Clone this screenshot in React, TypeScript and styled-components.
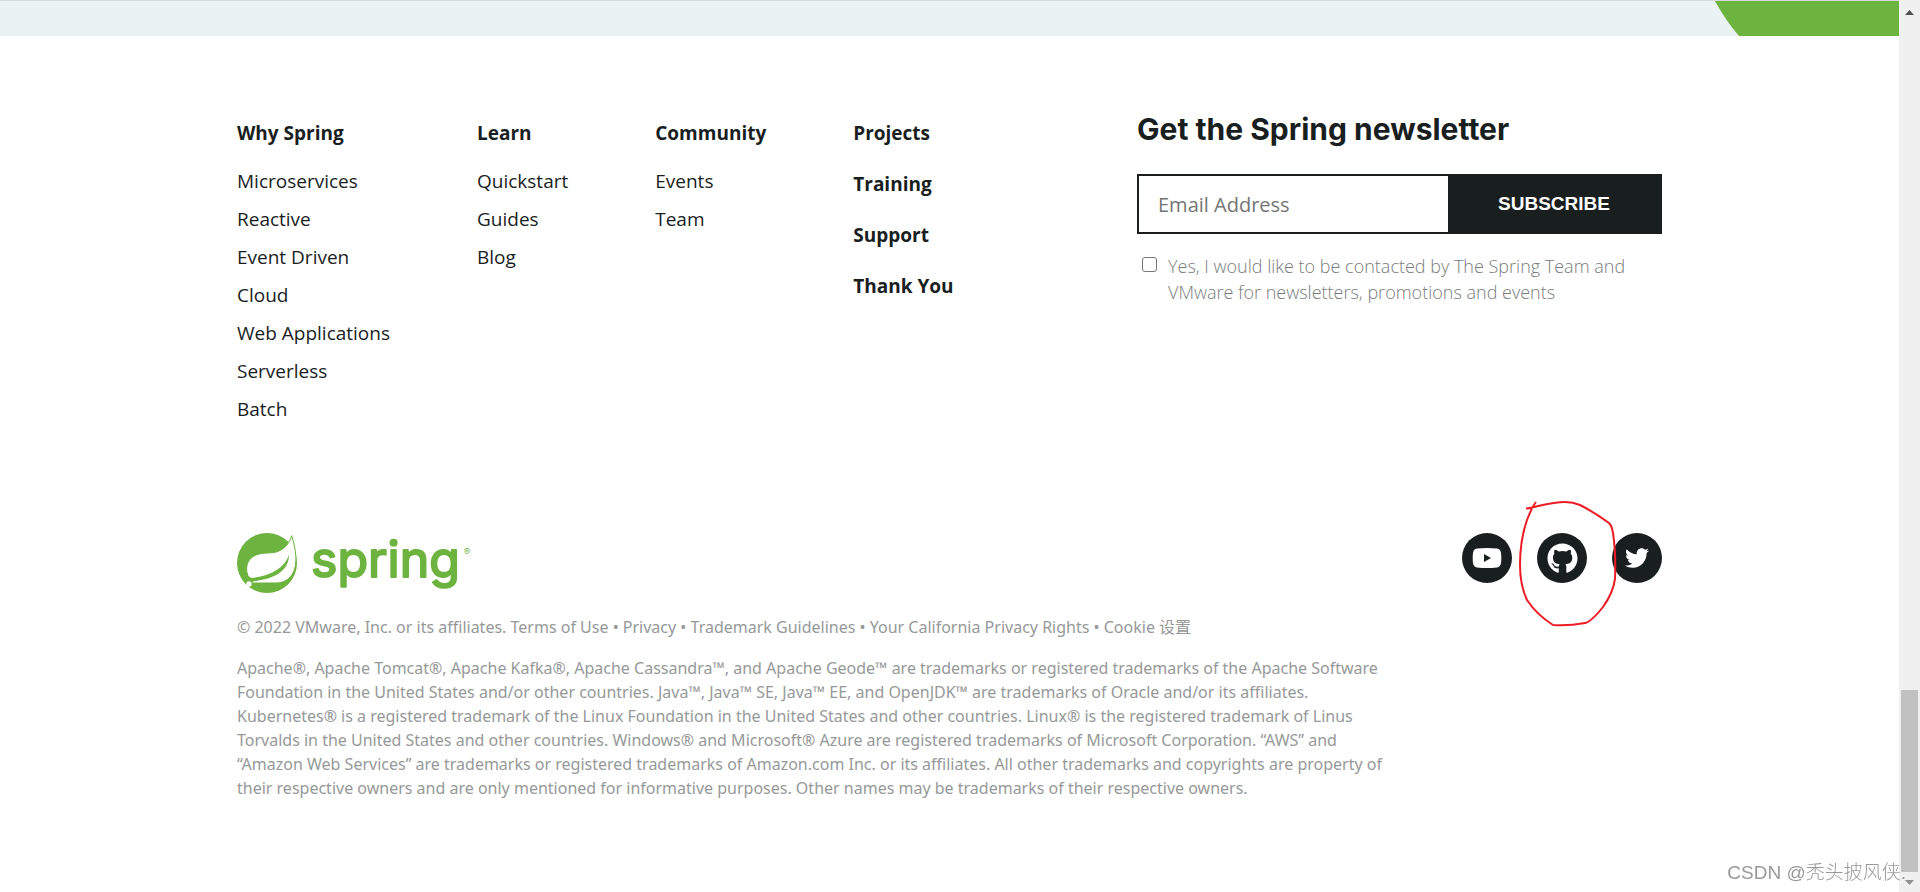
import React from "react";
import styled, { createGlobalStyle } from "styled-components";
import { FaGithub, FaTwitter } from "react-icons/fa";

const ink = "#191e1e";
const green = "#6db33f";
const muted = "#969999";

const GlobalStyle = createGlobalStyle`
  *, *::before, *::after { box-sizing: border-box; }
  body {
    margin: 0;
    background: #fff;
    color: ${ink};
    font-family: "Open Sans", "Noto Sans CJK SC", sans-serif;
  }
  a { color: inherit; text-decoration: none; }
  h2, h3, p, ul { margin: 0; padding: 0; }
  ul { list-style: none; }
`;

const Shell = styled.div`
  display: flex;
  min-height: 100vh;
`;

const Page = styled.div`
  flex: 1;
  min-width: 0;
`;

const Band = styled.div`
  display: flex;
  justify-content: flex-end;
  height: 36px;
  background: #ebf2f2;
  border-top: 1px solid #d8dada;
`;

const BandCurve = styled.svg`
  display: block;
  width: 184px;
  height: 35px;
`;

const Footer = styled.footer`
  max-width: 1475px;
  margin: 0 auto;
  padding: 72px 25px 80px;
`;

const FooterTop = styled.div`
  display: flex;
  justify-content: space-between;
  align-items: flex-start;
  min-height: 425px;
`;

const Nav = styled.nav`
  display: flex;
  gap: 87px;
  padding-top: 10px;
`;

const NavTitle = styled.h3`
  font-size: 19px;
  line-height: 30px;
  font-weight: 700;
`;

const NavList = styled.ul`
  padding-top: 14px;
`;

const NavItem = styled.li`
  font-size: 19px;
  line-height: 38px;
`;

const TitleStack = styled.div`
  display: flex;
  flex-direction: column;
  gap: 21px;
`;

const Newsletter = styled.section`
  width: 525px;
`;

const NewsletterTitle = styled.h2`
  font-family: Inter, sans-serif;
  font-size: 30px;
  line-height: 42px;
  font-weight: 700;
`;

const Form = styled.form`
  padding-top: 24px;
`;

const FieldRow = styled.div`
  display: flex;
  height: 60px;
  border: 2px solid ${ink};
`;

const EmailInput = styled.input`
  flex: 1;
  min-width: 0;
  border: 0;
  padding: 0 19px;
  background: #fff;
  font: 400 20px "Open Sans", sans-serif;
  color: ${ink};
  &::placeholder { color: #757575; opacity: 1; }
`;

const Subscribe = styled.button`
  width: 212px;
  border: 0;
  background: ${ink};
  color: #fff;
  font: 700 19px "Liberation Sans", Arial, sans-serif;
`;

const Consent = styled.label`
  display: flex;
  gap: 11px;
  padding: 19px 0 0 5px;
  color: #7a7d7d;
  font-size: 18px;
  font-weight: 300;
  line-height: 26px;
`;

const Tick = styled.input`
  appearance: none;
  flex: none;
  width: 15px;
  height: 15px;
  margin: 4px 0 0;
  border: 1px solid #767676;
  border-radius: 3px;
  background: #fff;
  &:checked { background: ${green}; }
`;

const BrandRow = styled.div`
  display: flex;
  justify-content: space-between;
  align-items: flex-start;
`;

const BrandLogo = styled.svg`
  display: block;
  width: 240px;
  height: 72px;
  overflow: visible;
`;

const Socials = styled.div`
  position: relative;
  display: flex;
  gap: 25px;
`;

const SocialLink = styled.a`
  display: flex;
  align-items: center;
  justify-content: center;
  width: 50px;
  height: 50px;
  border-radius: 50%;
  background: ${ink};
  color: #fff;
`;

const PenCircle = styled.svg`
  position: absolute;
  left: 50px;
  top: -38px;
  width: 110px;
  height: 136px;
  pointer-events: none;
`;

const Legal = styled.div`
  max-width: 1165px;
  padding-top: 10px;
  color: ${muted};
  font-family: "Noto Sans", "Noto Sans CJK SC", sans-serif;
  font-size: 16px;
  line-height: 24px;
`;

const Trademarks = styled.p`
  padding-top: 17px;
`;

const Scrollbar = styled.div`
  position: sticky;
  top: 0;
  display: flex;
  flex-direction: column;
  align-items: center;
  width: 21px;
  height: 100vh;
  padding: 10px 0 7px;
  background: #f0f0f0;
`;

const Arrow = styled.svg`
  display: block;
  width: 9px;
  height: 5px;
`;

const Track = styled.div`
  display: flex;
  flex: 1;
  align-items: flex-end;
  padding-bottom: 8px;
`;

const Thumb = styled.div`
  width: 17px;
  height: 182px;
  background: #c1c1c1;
`;

const Watermark = styled.div`
  position: fixed;
  right: 14px;
  bottom: 5px;
  color: #999;
  font: 300 19px/28px "Liberation Sans", "Noto Sans CJK SC", sans-serif;
  text-shadow: -1px -1px 0 #fff;
`;

const columns = [
  {
    title: "Why Spring",
    items: ["Microservices", "Reactive", "Event Driven", "Cloud", "Web Applications", "Serverless", "Batch"],
  },
  { title: "Learn", items: ["Quickstart", "Guides", "Blog"] },
  { title: "Community", items: ["Events", "Team"] },
];

const titles = ["Projects", "Training", "Support", "Thank You"];

const legalLinks = ["Terms of Use", "Privacy", "Trademark Guidelines", "Your California Privacy Rights", "Cookie 设置"];

function SpringLogo() {
  return (
    <BrandLogo viewBox="0 0 240 72" role="img" aria-label="Spring">
      <svg width="62" height="62" viewBox="15 15 186 186">
        <circle cx="105" cy="105" r="90" fill={green} />
        <path
          d="M179 23C174 42 160 62 136 71C114 78 88 71 66 84C47 95 40 115 46 138Q49 152 62 165H132C160 165 174 151 184 133C196 107 194 70 179 23Z"
          fill="#fff"
          stroke={green}
          strokeWidth="3"
        />
        <path d="M171 80C160 117 119 142 61 150L53 161C117 155 171 135 171 80Z" fill={green} />
        <path d="M47 145L62 151L62 161L50 165Z" fill={green} />
        <circle cx="51" cy="168" r="8" fill="#fff" />
      </svg>
      <text
        x="74"
        y="44"
        fill={green}
        stroke={green}
        strokeWidth="2"
        strokeLinejoin="round"
        fontFamily="Inter, sans-serif"
        fontSize="50"
        fontWeight="400"
      >
        spring
      </text>
      <text x="227" y="22" fill={green} fontFamily="Inter, sans-serif" fontSize="9">®</text>
    </BrandLogo>
  );
}

function YoutubeIcon() {
  return (
    <svg width="30" height="20" viewBox="0 0 30 20" aria-hidden="true">
      <path
        d="M5 .6Q15-.4 25 .6Q28.500 1 29 5Q29.600 10 29 15Q28.500 19 25 19.400Q15 20.400 5 19.400Q1.500 19 1 15Q.4 10 1 5Q1.500 1 5 .6ZM12 6V14L19 10Z"
        fill="currentColor"
        fillRule="evenodd"
      />
    </svg>
  );
}

export default function App() {
  return (
    <>
      <GlobalStyle />
      <Shell>
        <Page>
          <Band>
            <BandCurve viewBox="0 0 184 35" aria-hidden="true">
              <path d="M0 0Q11 20 24 35H184V0Z" fill={green} />
            </BandCurve>
          </Band>
          <Footer>
            <FooterTop>
              <Nav aria-label="Footer">
                {columns.map((column) => (
                  <div key={column.title}>
                    <NavTitle><a href="#">{column.title}</a></NavTitle>
                    <NavList>
                      {column.items.map((item) => (
                        <NavItem key={item}><a href="#">{item}</a></NavItem>
                      ))}
                    </NavList>
                  </div>
                ))}
                <TitleStack>
                  {titles.map((title) => (
                    <NavTitle key={title}><a href="#">{title}</a></NavTitle>
                  ))}
                </TitleStack>
              </Nav>
              <Newsletter>
                <NewsletterTitle>Get the Spring newsletter</NewsletterTitle>
                <Form onSubmit={(event) => event.preventDefault()}>
                  <FieldRow>
                    <EmailInput type="email" placeholder="Email Address" aria-label="Email Address" />
                    <Subscribe type="submit">SUBSCRIBE</Subscribe>
                  </FieldRow>
                  <Consent>
                    <Tick type="checkbox" />
                    <span>
                      Yes, I would like to be contacted by The Spring Team and VMware for newsletters, promotions and
                      events
                    </span>
                  </Consent>
                </Form>
              </Newsletter>
            </FooterTop>
            <BrandRow>
              <SpringLogo />
              <Socials>
                <SocialLink href="#" aria-label="YouTube"><YoutubeIcon /></SocialLink>
                <SocialLink href="#" aria-label="GitHub"><FaGithub size={31} /></SocialLink>
                <SocialLink href="#" aria-label="Twitter"><FaTwitter size={24} /></SocialLink>
                <PenCircle viewBox="0 10 110 136" aria-hidden="true">
                  <path
                    d="M14 23.500Q18 23.500 26 21Q44 17 53 17Q61 17 68 20Q82 27 97 38Q100 41 101 48Q104 68 103 94Q101 108 91 122Q79 137 73 138Q57 141 41 140Q25 130 15 115Q8 100 8 80Q8 55 15 35Q20 22 24 17"
                    fill="none"
                    stroke="#ed1c24"
                    strokeWidth="2"
                  />
                </PenCircle>
              </Socials>
            </BrandRow>
            <Legal>
              <p>
                © 2022 VMware, Inc. or its affiliates.{" "}
                {legalLinks.map((link, index) => (
                  <React.Fragment key={link}>
                    {index > 0 && " • "}
                    <a href="#">{link}</a>
                  </React.Fragment>
                ))}
              </p>
              <Trademarks>
                Apache®, Apache Tomcat®, Apache Kafka®, Apache Cassandra™, and Apache Geode™ are trademarks or
                registered trademarks of the Apache Software Foundation in the United States and/or other countries.
                Java™, Java™ SE, Java™ EE, and OpenJDK™ are trademarks of Oracle and/or its affiliates. Kubernetes® is
                a registered trademark of the Linux Foundation in the United States and other countries. Linux® is the
                registered trademark of Linus Torvalds in the United States and other countries. Windows® and
                Microsoft® Azure are registered trademarks of Microsoft Corporation. “AWS” and “Amazon Web Services”
                are trademarks or registered trademarks of Amazon.com Inc. or its affiliates. All other trademarks and
                copyrights are property of their respective owners and are only mentioned for informative purposes.
                Other names may be trademarks of their respective owners.
              </Trademarks>
            </Legal>
          </Footer>
        </Page>
        <Scrollbar aria-hidden="true">
          <Arrow viewBox="0 0 9 5"><path d="M0 5L4.500 0L9 5Z" fill="#505050" /></Arrow>
          <Track><Thumb /></Track>
          <Arrow viewBox="0 0 9 5"><path d="M0 0L4.500 5L9 0Z" fill="#909090" /></Arrow>
        </Scrollbar>
      </Shell>
      <Watermark>CSDN @秃头披风侠.</Watermark>
    </>
  );
}
